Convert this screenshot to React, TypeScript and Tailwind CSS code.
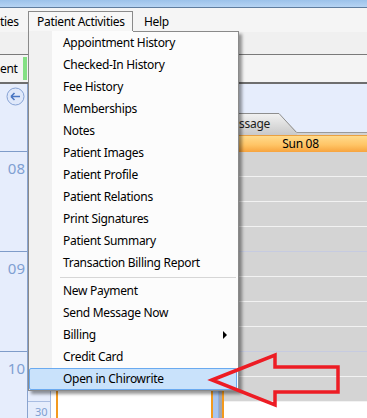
import React from "react"

const topItems = [
  "Appointment History",
  "Checked-In History",
  "Fee History",
  "Memberships",
  "Notes",
  "Patient Images",
  "Patient Profile",
  "Patient Relations",
  "Print Signatures",
  "Patient Summary",
  "Transaction Billing Report",
]

const bottomItems = ["New Payment", "Send Message Now", "Billing", "Credit Card", "Open in Chirowrite"]

const minutes = ["00", "15", "30", "45"]
const rows = Array.from({ length: 11 }, (_, i) => i)

function BackButton() {
  return (
    <svg width="19" height="19" viewBox="0 0 19 19">
      <circle cx="9.5" cy="9.5" r="8.5" fill="#dfe8fa" stroke="#86a2d4" strokeWidth="1" />
      <path d="M5 9.5h9M5 9.5l3.5-3.5M5 9.5l3.5 3.5" stroke="#4a76c2" strokeWidth="1.6" fill="none" />
    </svg>
  )
}

function MenuItem({ label, arrow, active }: { label: string; arrow?: boolean; active?: boolean }) {
  return (
    <div
      className={
        active
          ? "h-[22px] mr-[1px] flex items-center justify-between pl-[33px] pr-[10px] border border-[#6aaaf0] rounded-[2px] bg-[#c9e2fb]"
          : "h-[22px] flex items-center justify-between pl-[34px] pr-[11px]"
      }
    >
      <span>{label}</span>
      {arrow && <span className="w-0 h-0 border-y-[4px] border-y-transparent border-l-[4px] border-l-black" />}
    </div>
  )
}

export default function App() {
  return (
    <div className="relative w-[367px] h-[418px] overflow-hidden flex flex-col bg-[#e6edfc] font-['Noto_Sans',sans-serif] text-[12px] tracking-[-0.3px] text-black">
      {/* window caption edge */}
      <div className="h-[8px] shrink-0 bg-[linear-gradient(to_bottom,#9cc2ea,#b6d4f3)] border-b border-[#5f7d9e]" />

      {/* menu bar */}
      <div className="h-[24px] shrink-0 bg-[#f5f5f5] flex items-end">
        <div className="w-[28px] h-[21px] flex items-center leading-none">ties</div>
        <div className="w-[105px] h-[21px] border border-b-0 border-[#8a8a8a] bg-[#f7f7f7] pl-[8px] flex items-center leading-none">
          Patient Activities
        </div>
        <div className="ml-[11px] h-[21px] flex items-center leading-none">Help</div>
      </div>

      {/* toolbar strips */}
      <div className="h-[23px] shrink-0 bg-[#f0f0f0] border-b border-[#7a7a7a]" />
      <div className="h-[29px] shrink-0 bg-[#f4f4f4] border-b-2 border-[#6e6e6e] flex items-center">
        <span className="w-[23px] leading-none">ent</span>
        <span className="w-[4px] h-[23px] bg-[#84e084]" />
      </div>

      {/* scheduler */}
      <div className="flex-1 flex min-h-0">
        {/* hour ruler */}
        <div className="w-[28px] shrink-0 border-r border-[#8aa4cf] flex flex-col">
          <div className="h-[67px] shrink-0 pt-[3px] pl-[6px]">
            <BackButton />
          </div>
          {["08", "09", "10"].map((h) => (
            <div key={h} className="h-[100px] shrink-0 border-t border-[#7f9cc9] pt-[6px] pr-[2px] text-right text-[15px] leading-[20px] tracking-normal text-[#7fa0d2]">
              {h}
            </div>
          ))}
        </div>

        <div className="flex-1 flex flex-col min-w-0">
          <div className="h-[29px] shrink-0" />

          {/* tab row */}
          <div className="h-[22px] shrink-0 flex items-end">
            <div className="relative ml-[150px] w-[119px] h-full flex items-center justify-end pr-[27px]">
              <svg className="absolute inset-0" width="119" height="22" viewBox="0 0 119 22">
                <defs>
                  <linearGradient id="tabg" x1="0" y1="0" x2="0" y2="1">
                    <stop offset="0" stopColor="#f2f2f2" />
                    <stop offset="1" stopColor="#c9c9c9" />
                  </linearGradient>
                </defs>
                <polygon points="0,0.5 101,0.5 119,19 119,22 0,22" fill="url(#tabg)" />
                <polyline points="0,0.5 101,0.5 118.5,19.5" fill="none" stroke="#8e8e8e" strokeWidth="1" />
              </svg>
              <span className="relative leading-none text-[#1c1c1c]">Massage</span>
            </div>
            <div className="flex-1 h-[3px] border-t border-[#9a9a9a] bg-[#d2d2d2]" />
          </div>

          {/* columns */}
          <div className="flex-1 flex min-h-0">
            <div className="w-[23px] shrink-0 border-r border-[#a9bde2] flex flex-col">
              <div className="h-[17px] shrink-0" />
              {rows.map((i) => (
                <div key={i} className="h-[25px] shrink-0 border-b border-[#a9bde2] pl-[7px] pt-[3px] text-[11px] leading-[14px] tracking-normal text-[#7fa0d2]">
                  {minutes[i % 4]}
                </div>
              ))}
            </div>
            <div className="w-[5px] shrink-0 bg-white" />
            <div className="w-[157px] shrink-0 bg-white border-x-2 border-[#f39a1e]" />
            <div className="w-[6px] shrink-0 bg-[#aac6ee] border-r border-[#8fb0e0]" />
            <div className="w-[3px] shrink-0 bg-[#a3a6b0]" />
            <div className="flex-1 border-l-2 border-[#f39a1e] flex flex-col min-w-0">
              <div className="h-[17px] shrink-0 pl-[10px] flex items-center justify-center border-t border-[#eaa040] bg-[linear-gradient(to_bottom,#ffdb8c,#ffc566_55%,#f7a43e)] leading-none">
                Sun 08
              </div>
              {rows.map((i) => (
                <div
                  key={i}
                  className={
                    i < 10
                      ? i % 4 === 3
                        ? "h-[25px] shrink-0 bg-[#d4d4d4] border-b border-[#c6cbe0]"
                        : "h-[25px] shrink-0 bg-[#d4d4d4] border-b border-[#f2f2f2]"
                      : "h-[25px] shrink-0 bg-white"
                  }
                />
              ))}
            </div>
          </div>
        </div>
      </div>

      {/* Patient Activities dropdown */}
      <div className="absolute left-[28px] top-[31px] w-[211px] border-x border-b border-[#8a8a8a] bg-[linear-gradient(to_right,#f1f1f1_23px,#fcfcfc_23px)] shadow-[3px_3px_3px_rgba(0,0,0,0.4)]">
        <div className="ml-[104px] h-px bg-[#8a8a8a]" />
        {topItems.map((t) => (
          <MenuItem key={t} label={t} />
        ))}
        <div className="h-[6px] flex items-center pl-[31px] pr-[2px]">
          <div className="w-full h-px bg-[#d6d6d6]" />
        </div>
        {bottomItems.map((t) => (
          <MenuItem key={t} label={t} arrow={t === "Billing"} active={t === "Open in Chirowrite"} />
        ))}
      </div>

      {/* red callout arrow */}
      <svg className="absolute left-[205px] top-[350px]" width="140" height="60" viewBox="0 0 140 60">
        <polygon
          points="7,30 70,5 70,17 133,17 133,42 70,42 70,55"
          fill="none"
          stroke="#ed1c24"
          strokeWidth="3.5"
          strokeLinejoin="miter"
        />
      </svg>
    </div>
  )
}
